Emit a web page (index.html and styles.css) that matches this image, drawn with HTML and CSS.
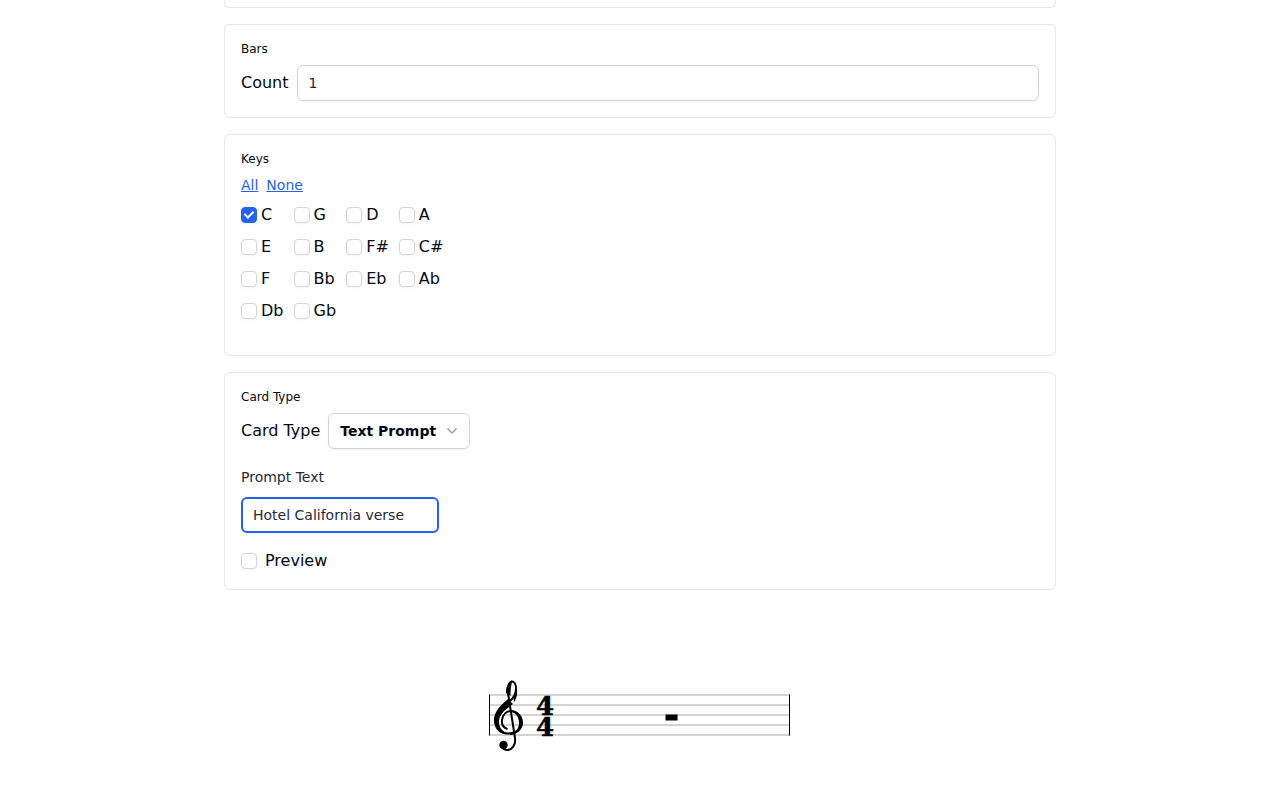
FILE: index.html
```html
<!DOCTYPE html>
<html lang="en">
<head>
    <meta charset="UTF-8">
    <meta name="viewport" content="width=device-width, initial-scale=1.0">
    <title>Chord Cards</title>
    <link rel="stylesheet" href="styles.css">
</head>
<body>
    <main class="container">
        <section class="card card-cut"></section>

        <section class="card">
            <div class="card-title">Bars</div>
            <div class="inline-field">
                <label for="barCount">Count</label>
                <input id="barCount" class="text-input grow" type="text" value="1">
            </div>
        </section>

        <section class="card card-keys">
            <div class="card-title">Keys</div>
            <div class="links">
                <a href="#">All</a>
                <a href="#">None</a>
            </div>
            <div class="key-grid">
                <label class="check"><input type="checkbox" checked>C</label>
                <label class="check"><input type="checkbox">G</label>
                <label class="check"><input type="checkbox">D</label>
                <label class="check"><input type="checkbox">A</label>
                <label class="check"><input type="checkbox">E</label>
                <label class="check"><input type="checkbox">B</label>
                <label class="check"><input type="checkbox">F#</label>
                <label class="check"><input type="checkbox">C#</label>
                <label class="check"><input type="checkbox">F</label>
                <label class="check"><input type="checkbox">Bb</label>
                <label class="check"><input type="checkbox">Eb</label>
                <label class="check"><input type="checkbox">Ab</label>
                <label class="check"><input type="checkbox">Db</label>
                <label class="check"><input type="checkbox">Gb</label>
            </div>
        </section>

        <section class="card">
            <div class="card-title">Card Type</div>
            <div class="inline-field">
                <label>Card Type</label>
                <div class="select-box">
                    <span>Text Prompt</span>
                    <svg class="chevron" width="10" height="6" viewBox="0 0 10 6"><path d="M0.5 0.5L5 5L9.5 0.5" fill="none" stroke="#9ca3af" stroke-width="1.5"/></svg>
                </div>
            </div>
            <label class="field-label" for="promptText">Prompt Text</label>
            <input id="promptText" class="text-input prompt-input" type="text" value="Hotel California verse">
            <label class="check check-wide"><input type="checkbox">Preview</label>
        </section>

        <div class="notation">
            <svg width="320" height="90" viewBox="480 670 320 90">
                <g stroke="#c4c4c4" stroke-width="1.5">
                    <line x1="489" y1="695" x2="790" y2="695"/>
                    <line x1="489" y1="705" x2="790" y2="705"/>
                    <line x1="489" y1="715" x2="790" y2="715"/>
                    <line x1="489" y1="725" x2="790" y2="725"/>
                    <line x1="489" y1="735" x2="790" y2="735"/>
                </g>
                <g stroke="#000" stroke-width="1">
                    <line x1="489.5" y1="694.5" x2="489.5" y2="735.5"/>
                    <line x1="789.5" y1="694.5" x2="789.5" y2="735.5"/>
                </g>
                <!-- treble clef -->
                <path d="M507.500 729C503 727.500 501.500 724 502 720C503 714 507 711 511 711C517 711 521 716 521 723C521 729 516 733.500 508 733.500C500 733.500 495 727 495.500 720C496 712 504 706 510 701C514 697.500 516 693 516 688C516 684 514 681.500 512 681.500C509 682 507.500 688 508 693L515 738C516 745 512 750 507 750C504 750 502 748 502 746" fill="none" stroke="#000" stroke-width="2"/>
                <path d="M494 720C494 711 502 704 508 699L513 704C506 709 499 714 499 722C499 727 502 731 507 733.500C499 735 494 728 494 720Z" fill="#000"/>
                <path d="M510 733.500C516 733 519 728 519 723C519 717 516 713.500 512 712C518.500 711 523 716 523 723C523 730 516 735 510 735Z" fill="#000"/>
                <path d="M506 693C505.500 686 509 681 512 680.500C511.500 685 510.500 689 510.500 696Z" fill="#000"/>
                <path d="M513.500 699C516 695 516 690 515 685C518 689 518 697 514 702Z" fill="#000"/>
                <circle cx="503.500" cy="745" r="4.200" fill="#000"/>
                <text class="time-sig" x="545" y="714.500" text-anchor="middle">4</text>
                <text class="time-sig" x="545" y="735.500" text-anchor="middle">4</text>
                <rect x="665.500" y="714.500" width="12" height="6" fill="#000"/>
            </svg>
        </div>
    </main>
</body>
</html>
```

FILE: styles.css
```css
html, body {
    margin: 0;
    padding: 0;
    background: #fff;
    overflow: hidden;
    font-family: "DejaVu Sans", sans-serif;
    color: #030712;
}
.container {
    width: 832px;
    margin: 0 auto;
    display: flex;
    flex-direction: column;
    gap: 16px;
}
.card {
    box-sizing: border-box;
    padding: 16px;
    background: #fff;
    border: 1px solid #e5e7eb;
    border-radius: 6px;
}
.card-cut {
    height: 8px;
    padding: 0;
    border-top: none;
    border-radius: 0 0 6px 6px;
}
.card-keys {
    padding-bottom: 28px;
}
.card-title {
    font-size: 12px;
    line-height: 16px;
    margin-bottom: 8px;
}
.inline-field {
    display: flex;
    align-items: center;
    gap: 8px;
    font-size: 16px;
    line-height: 24px;
}
.text-input {
    box-sizing: border-box;
    height: 36px;
    padding: 0 11px;
    font-family: inherit;
    font-size: 14px;
    color: #1f2937;
    background: #fff;
    border: 1px solid #d1d5db;
    border-radius: 6px;
    box-shadow: 0 1px 2px rgba(0, 0, 0, 0.05);
    outline: none;
}
.grow {
    flex: 1;
}
.links {
    display: flex;
    gap: 8px;
    font-size: 14px;
    line-height: 20px;
    margin-bottom: 4px;
}
.links a {
    color: #2563eb;
}
.key-grid {
    display: grid;
    grid-template-columns: repeat(4, 52.600px);
    justify-content: start;
    grid-auto-rows: 32px;
}
.check {
    display: flex;
    align-items: center;
    gap: 4px;
    font-size: 16px;
    line-height: 24px;
}
.check input {
    appearance: none;
    box-sizing: border-box;
    position: relative;
    width: 16px;
    height: 16px;
    margin: 0;
    background: #fff;
    border: 1px solid #d1d5db;
    border-radius: 4px;
    box-shadow: 0 1px 2px rgba(0, 0, 0, 0.05);
}
.check input:checked {
    background: #2563eb;
    border-color: #2563eb;
}
.check input:checked::after {
    content: "";
    position: absolute;
    left: 3.800px;
    top: 1px;
    width: 4px;
    height: 7px;
    border: solid #fff;
    border-width: 0 2.500px 2.500px 0;
    transform: rotate(45deg);
}
.check-wide {
    gap: 8px;
    height: 24px;
    margin-top: 16px;
}
.select-box {
    box-sizing: border-box;
    display: flex;
    align-items: center;
    gap: 11px;
    height: 36px;
    padding: 0 12px 0 11px;
    font-size: 14px;
    font-weight: 700;
    border: 1px solid #d1d5db;
    border-radius: 6px;
    box-shadow: 0 1px 2px rgba(0, 0, 0, 0.05);
}
.field-label {
    display: block;
    margin: 18px 0 10px;
    font-size: 14px;
    line-height: 20px;
    color: #1f2937;
}
.prompt-input {
    display: block;
    width: 198px;
    border: 2px solid #2563eb;
    padding: 0 10px;
}
.notation {
    margin-top: 64px;
    display: flex;
    justify-content: center;
}
.time-sig {
    font-family: "DejaVu Serif", serif;
    font-weight: 700;
    font-size: 26px;
    fill: #000;
    stroke: #000;
    stroke-width: 0.5px;
}
```
